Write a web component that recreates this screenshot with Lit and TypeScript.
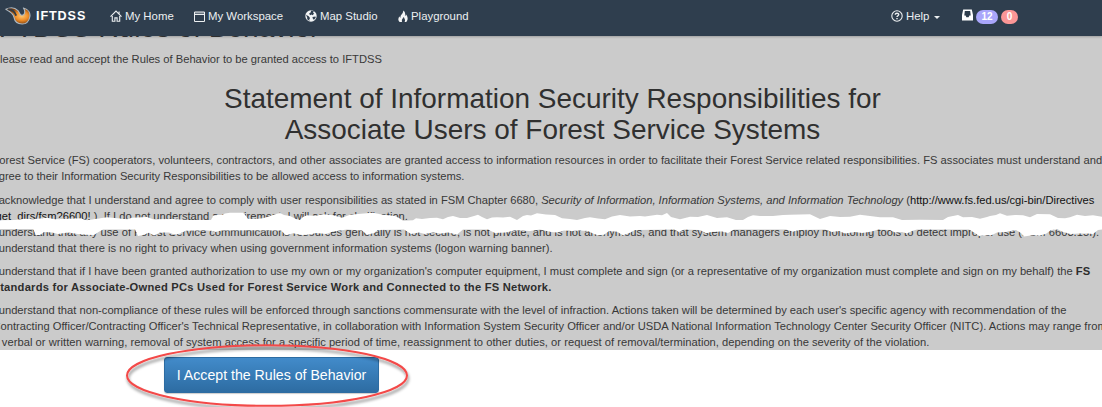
import { LitElement, html, css, svg } from "lit";
import { customElement } from "lit/decorators.js";

// Torn-paper outline: upper edge left to right, then lower edge right to left.
const upper: number[][] = [
  [0,10.3],[15,10],[25,8.7],[33,9.3],[47,7.7],[55,9.3],[80,8.3],[87,10.3],[97,8.7],[107,7.3],[127,9.3],[132,7.7],[147,7],[153,9.3],[173,9],[187,10],[211,10],[213,6],[217,5],[222,5],[225,3.5],[230,2.7],[243,2.7],[246,6],[248,9],[256,9],[263,8.3],
  [270,6],[276,4],[280,3],[284,5],[290,6],[296,9],[300,10],[303,7],[307,5.3],[315,6],[323,4.3],[333,5.3],[342,7.7],[350,4.7],[358,4],[367,3.3],[373,2.7],[383,4.7],[395,6],[399,8],[403,10.7],[413,10.3],[416,8.3],[422,9],[430,8],[437,7.7],[443,9.3],[448,7],[453,6],[460,8],[467,8],[474,6],[478,4.7],[482,7],[487,9.3],[492,7.5],[497,7.3],[503,7.5],[510,6.7],[517,10],[523,6],[527,5],[531,5.5],[537,3.3],
  [546,4.5],[555,5],[562,8.3],[570,9],[577,10],[585,8],[590,7.3],[598,8.5],[605,9.3],[612,6.5],[620,5],[630,6.6],[640,6],[645,6.5],[657,4.7],[662,5.2],[667,3],[671,7],[680,9.3],[690,6.7],[698,7],[707,5],[717,8],[727,7.3],[736,10],[743,10],[748,7],[753,5.3],[760,6],[773,6],[783,5],[790,4.7],[810,4.3],
  [820,9],[830,6],[840,7],[850,6.7],[860,4.7],[870,6],[880,7.3],[893,7.3],[902,10],[920,9.7],[943,10],[948,7],[953,6],[958,5],[963,7.3],[972,7],[980,8.7],[987,7],[990,6],[996,5],[1000,3.3],[1007,5.7],[1015,5],[1023,5.3],[1030,7.3],[1037,4],[1050,4.3],[1058,8],[1065,8.3],[1070,7.3],[1077,4.7],[1085,6],[1093,5.3],[1102,6.7],
];
const lower: number[][] = [
  [0,18.9],[33,18.9],[36,25],[40,25],[44,22],[52,22.6],[58,24],[68,22.5],[78,24],[86,24.8],[94,25],[99,21.8],[103,19.6],[135,19.6],[138,26],[143,25],[149,22.8],[154,25.4],[160,22.4],[169,22.4],[175,24.8],[180,23.5],[186,20.8],[205,20.2],[211,20.8],[216,22],[221,20.5],[253,20.3],[281,20.6],[286,25.2],[293,23.3],[302,25],[310,24.5],[316,23],[326,24],[333,21.5],[347,19.6],[362,20.5],[367,24.7],[374,23],[378,20],[404,19.6],[411,24],[419,22.4],[425,24],[433,22.5],[441,23.6],[448,22.5],[457,24.5],[463,19.6],[488,19.6],[495,23],[506,22.4],[515,20.3],[530,21],[540,19.6],
  [551,22],[557,22.5],[564,20.5],[572,21],[580,20.6],[588,21],[593,23.5],[598,25.3],[604,24.8],[609,21],[617,21.8],[623,25.3],[630,22.8],[635,20],[674,19.6],[679,22],[684,19.6],[700,20],[706,23.3],[711,22],[722,21.5],[728,23],[734,19.6],[786,19.4],[793,21.7],[799,20],[825,19.5],[832,22],[839,21],[845,23.5],[855,22],[862,23],[872,21.5],[878,19.4],[890,20],[895,22.6],[902,22],[907,23.5],[912,21],[917,19.6],[969,19.4],[975,23],[979,26],[987,25.2],[992,25],[997,22.5],[1006,22],[1016,20],[1021,23],[1024,26.6],[1032,25.3],[1040,25.4],[1046,23.8],[1051,20],[1058,19.6],[1063,22],[1071,24],[1079,23.5],[1087,23.5],[1093,24],[1098,20],[1102,19.5],
];
const tearPoints = [...upper, ...[...lower].reverse()].map((p) => p.join(",")).join(" ");

@customElement("app-root")
export class AppRoot extends LitElement {
  static styles = css`
    :host { display: block; width: 1102px; height: 407px; overflow: hidden; background: #fff; font-family: "Liberation Sans", Arial, sans-serif; color: #383838; }
    .nav { position: relative; z-index: 2; height: 36px; box-sizing: border-box; background: #2f3e4e; color: #eceff1; display: flex; align-items: center; padding: 0 84px 4px 5px; font-size: 11.4px; box-shadow: 0 1px 2px rgba(0,0,0,.22); white-space: nowrap; }
    .brand { display: flex; align-items: center; gap: 4px; width: 105px; font-size: 12.6px; letter-spacing: .9px; font-weight: bold; color: #fff; }
    .item { display: flex; align-items: center; gap: 3px; }
    .home { width: 84px; }
    .work { width: 111px; }
    .map { width: 93px; }
    .help { margin-left: auto; width: 71px; }
    .caret { border: 3px solid transparent; border-top-color: #eceff1; border-bottom: 0; margin: 2px 0 0 2px; }
    .inbox { display: flex; align-items: center; gap: 3px; }
    .tray { margin-top: -2px; }
    .badge { height: 14px; border-radius: 8px; color: #fff; font-weight: bold; font-size: 10px; line-height: 14px; text-align: center; margin-top: 2px; }
    .blue { width: 22px; background: #a9a6fb; }
    .red { width: 17px; background: #fb9696; }
    .page { position: relative; height: 314px; overflow: hidden; background: #cbcbcb; font-size: 11.18px; white-space: nowrap; }
    .upper { height: 187px; overflow: hidden; line-height: 16px; }
    .lower { height: 127px; overflow: hidden; line-height: 15.8px; }
    .title { margin: -24px 0 0 -9px; font-size: 28px; line-height: 32px; font-weight: normal; height: 30px; }
    .copy { margin: 0 0 8px -7.5px; }
    .lower .copy { margin-bottom: 7.6px; }
    .intro { margin-top: 9px; }
    .statement { margin: 15.5px 0 7px 3px; text-align: center; font-weight: normal; font-size: 27.95px; line-height: 31px; color: #303030; }
    .lower .resume { margin-top: 2px; }
    .wide { letter-spacing: .025px; }
    .tight { letter-spacing: -.02px; }
    .link { color: #111; }
    .strong { color: #2d2d2d; letter-spacing: .22px; }
    .tear { position: absolute; left: 0; top: 174px; display: block; }
    .actions { position: relative; height: 57px; padding: 7px 0 0 164px; box-sizing: border-box; }
    .accept { display: block; width: 215px; height: 36px; box-sizing: border-box; border: 1px solid #2d6ca2; border-radius: 3px; padding: 0; background: linear-gradient(#428bca, #2d6ca2); color: #fff; font: 14.15px "Liberation Sans", Arial, sans-serif; box-shadow: 0 1px 1px rgba(0,0,0,.2); white-space: nowrap; }
    .ring { position: absolute; left: 120px; top: -10px; z-index: 3; pointer-events: none; }
  `;

  render() {
    return html`
      <nav class="nav">
        <div class="brand">
          <svg width="27" height="20" viewBox="0 0 27 20">
            <defs><radialGradient id="flame" cx=".66" cy=".5" r=".55"><stop offset="0" stop-color="#ffc873"/><stop offset=".5" stop-color="#ed8b26"/><stop offset="1" stop-color="#71380f"/></radialGradient></defs>
            <path d="M.8 3.2C5 1.2 10 1.6 13 4.6C15 6.8 14.6 9.4 17 9.3C20 9.2 20.6 5 18.4 2C23.6 3.2 25.6 7 24.8 11C23.8 16 21 18 17.2 18C12.4 18 9.6 15 9 11.4C8.4 7.6 5 5.4 .8 3.2Z" fill="url(#flame)" stroke="#aeb9c2" stroke-width="1.1" stroke-linejoin="round"/>
            <path d="M2.8 3.4C7.6 3.2 9.8 5.6 11.2 9.6" fill="none" stroke="#303b44" stroke-width="1.8"/>
          </svg>
          <span>IFTDSS</span>
        </div>
        <div class="item home">
          <svg width="12" height="12" viewBox="0 0 12 12" fill="none" stroke="#eceff1" stroke-width="1.1"><path d="M.5 6.7 6 1.1 11.5 6.7M9.1 3.8V1.5M2.3 6v5.2h2.6V7.9h2.2v3.3h2.6V6"/></svg>
          <span>My Home</span>
        </div>
        <div class="item work">
          <svg width="11" height="11" viewBox="0 0 11 11" fill="none" stroke="#eceff1"><path d="M.5 1h10v9.5H.5zM.5 3.5h10"/><path d="M1 2h9" opacity=".6"/></svg>
          <span>My Workspace</span>
        </div>
        <div class="item map">
          <svg width="12" height="12" viewBox="0 0 12 12"><circle cx="6" cy="6" r="5.7" fill="#f2f4f5"/><path d="M6.2.6 8.8 1.3 8 3 9.3 3.6 7.5 5.3 6.4 4.4 5.3 5.3 4 3.7 5.6 2.5zM1 4.8 3.7 6.2 5 8 4.2 9.7 4.6 11 2.2 9.3 2.2 7.4zM7.4 7 10.5 6.4 10.7 7.7 9 9.8 8 9z" fill="#2f3e4e"/></svg>
          <span>Map Studio</span>
        </div>
        <div class="item">
          <svg width="10" height="13" viewBox="0 0 10 13"><path d="M5.2.4C8.2 2.6 6.7 4.6 7 6.1 7.9 5.7 7.8 4.7 7.6 4 9.7 6 10.6 9.3 8.2 12H6.6C7.8 9.6 6.3 8.7 5.8 7 4.8 8.4 3.2 9.7 4.1 12H1.8C-.3 10.2.1 8 1.5 6.3 1.6 7 1.8 7.5 2.5 7.7 2.2 4.8 5.5 3.8 5.2.4Z" fill="#f4f5f6"/></svg>
          <span>Playground</span>
        </div>
        <div class="item help">
          <svg width="12" height="12" viewBox="0 0 12 12" fill="none" stroke="#eceff1"><circle cx="6" cy="6" r="5.2" stroke-width="1.1"/><path d="M4.3 4.8C4.2 2.7 7.8 2.8 7.7 4.7 7.6 5.8 6.1 5.7 6 7M6 8v1.2" stroke-width="1.4"/></svg>
          <span>Help</span><span class="caret"></span>
        </div>
        <div class="inbox">
          <svg class="tray" width="11" height="12" viewBox="0 0 11 12"><path fill-rule="evenodd" d="M1.2.5h8.6L11 6v5.5H0V6zM2.8 2 2.3 6.6h1.3L4.4 8.2h2.2l.8-1.6h1.3L8.2 2z" fill="#fff"/></svg>
          <span class="badge blue">12</span><span class="badge red">0</span>
        </div>
      </nav>
      <main class="page">
        <div class="upper">
          <h1 class="title">IFTDSS Rules of Behavior</h1>
          <p class="copy intro">Please read and accept the Rules of Behavior to be granted access to IFTDSS</p>
          <h2 class="statement">Statement of Information Security Responsibilities for<br>Associate Users of Forest Service Systems</h2>
          <p class="copy"><span class="wide">Forest Service (FS) cooperators, volunteers, contractors, and other associates are granted access to information resources in order to facilitate their Forest Service related responsibilities. FS associates must understand and</span><br><span class="tight">agree to their Information Security Responsibilities to be allowed access to information systems.</span></p>
          <p class="copy"><span class="tight">I acknowledge that I understand and agree to comply with user responsibilities as stated in FSM Chapter 6680, <i>Security of Information, Information Systems, and Information Technology</i> (<span class="link">http://www.fs.fed.us/cgi-bin/Directives</span></span><br><span class="link">/get_dirs/fsm?6600!</span> ). If I do not understand a requirement, I will ask for clarification.</p>
        </div>
        <div class="lower">
          <p class="copy resume">I understand that any use of Forest Service communications resources generally is not secure, is not private, and is not anonymous, and that system managers employ monitoring tools to detect improper use (FSM 6603.15f).<br>I understand that there is no right to privacy when using government information systems (logon warning banner).</p>
          <p class="copy">I understand that if I have been granted authorization to use my own or my organization's computer equipment, I must complete and sign (or a representative of my organization must complete and sign on my behalf) the <b class="strong">FS<br>Standards for Associate-Owned PCs Used for Forest Service Work and Connected to the FS Network.</b></p>
          <p class="copy">I understand that non-compliance of these rules will be enforced through sanctions commensurate with the level of infraction. Actions taken will be determined by each user's specific agency with recommendation of the<br>Contracting Officer/Contracting Officer's Technical Representative, in collaboration with Information System Security Officer and/or USDA National Information Technology Center Security Officer (NITC). Actions may range from<br><span class="wide">a verbal or written warning, removal of system access for a specific period of time, reassignment to other duties, or request of removal/termination, depending on the severity of the violation.</span></p>
        </div>
        <svg class="tear" width="1102" height="30" viewBox="0 0 1102 30">${svg`<polygon points=${tearPoints} fill="#fff"/>`}</svg>
      </main>
      <footer class="actions">
        <button class="accept">I Accept the Rules of Behavior</button>
        <svg class="ring" width="295" height="67" viewBox="0 0 295 67">
          <defs><filter id="shade" x="-10%" y="-20%" width="120%" height="150%"><feDropShadow dx="1" dy="3" stdDeviation="1.5" flood-color="#000" flood-opacity=".45"/></filter></defs>
          <ellipse cx="147" cy="35.5" rx="140" ry="30.3" fill="none" stroke="#f34a48" stroke-width="2" filter="url(#shade)"/>
        </svg>
      </footer>
    `;
  }
}
